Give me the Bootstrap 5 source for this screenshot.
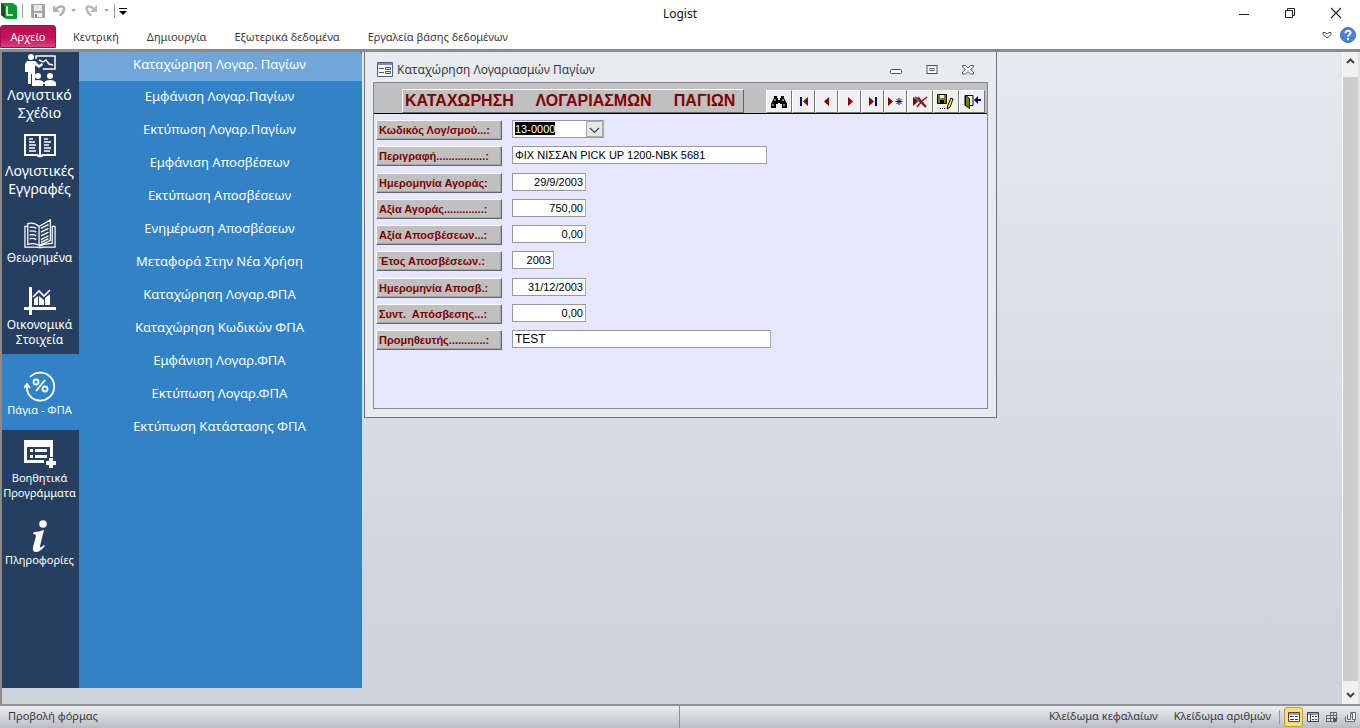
<!DOCTYPE html>
<html lang="el">
<head>
<meta charset="utf-8">
<meta name="viewport" content="width=device-width, initial-scale=1">
<title>Logist</title>
<link href="https://cdn.jsdelivr.net/npm/bootstrap@5.3.0/dist/css/bootstrap.min.css" rel="stylesheet">
<style>
body{font-family:"Noto Sans","Open Sans",sans-serif;font-size:11px;line-height:15px;color:#3b3b3b;background:#fff}
button,.plain-link{border:0;background:none;padding:0;color:inherit;text-decoration:none}
svg{display:block;flex:none}
/* title bar and ribbon */
.title-bar{height:25px}
.title-bar .app-name{font-size:12px;color:#111}
.title-bar .caption-buttons{gap:30px;padding-right:18px}
.vline{width:1px;height:14px;background:#999}
.ribbon{height:24px}
.ribbon .file-tab{width:56px;height:23px;color:#fff;background:linear-gradient(#b30f4f,#c4105a 55%,#d9437c);border:1px solid #a50d49;border-radius:3px 3px 0 0}
.ribbon .tabs{gap:28px;padding:0 0 2px 17px}
.workspace{border-top:3px solid #8a8d90;border-left:2px solid #8a8a8a;background:linear-gradient(#e6eaee,#cfd3dc 90%)}
/* navigation */
.side-nav{width:77px;background:#263f60;color:#fff;margin-bottom:16px}
.side-nav a{display:flex;flex-direction:column;align-items:center;color:#fff;text-decoration:none;text-align:center;white-space:nowrap;padding:16px 2px 4px 0}
.side-nav .mid{font-size:12px}
.side-nav .big{font-size:14px;line-height:18px;padding-top:4px}
.side-nav .first{padding-top:2px}
.side-nav .stats{padding-bottom:7px}
.side-nav .tools{padding-top:8px}
.side-nav .current{background:#3282c8;padding-bottom:13px}
.sub-nav{width:283px;background:#3282c8;margin-bottom:16px;font-size:13px}
.sub-nav a{display:flex;align-items:center;justify-content:center;height:33px;padding:0 2px 2px 0;color:#fff;text-decoration:none;white-space:nowrap}
.sub-nav a.current{height:29px;background:#70a6da;border-radius:0 4px 0 0;padding-bottom:4px}
/* child window */
.child-window{width:633px;margin-left:2px;border:1px solid #6d7378;border-top:0;background:#e8ebee;padding:0 8px 8px;color:#3b3b3b}
.child-title{height:30px;padding:5px 14px 0 4px;font-size:12px}
.child-title .caption-buttons{gap:24px}
.form-frame{border:1px solid #868a8f;background:#e6e6ff;min-height:327px;color:#000}
.form-head{background:#c0c0c0;border-bottom:1px solid #000;height:31px;padding:0 2px 0 28px}
.form-head h1{font:bold 16px/22px "Liberation Sans",sans-serif;color:#800000;margin:0;padding:0 8px 0 2px;white-space:pre;border:1px solid;border-color:#fff #666 #666 #fff}
.tool-buttons button{width:23px;height:23px;background:#f0f0f0;border:1px solid;border-color:#fff #777 #777 #fff;display:flex;align-items:center;justify-content:center}
.tool-buttons button.wide{width:26px}
.field-list{height:231px;margin:6px 0 0 2px}
.field-row{display:flex;align-items:flex-start;height:21px}
.field-row label{width:126px;height:20px;margin-right:10px;padding:1px 2px;background:#c0c0c0;border:1px solid;border-color:#fff #666 #666 #fff;box-shadow:inset -1px -1px #a4a4a4;font:bold 11px/16px "Liberation Sans",sans-serif;color:#800000;white-space:pre}
.fld{font:11px/14px "Liberation Sans",sans-serif;color:#000;background:#fff;border:1px solid #999;border-right-color:#aaa;border-radius:0;height:18px;width:74px;padding:0 2px;appearance:none}
.fld.year{width:42px}
.fld.desc{width:255px}
.fld.supplier{width:259px;font-size:12px}
.fld.code{width:92px;color:#fff;background:#fff linear-gradient(#000,#000) no-repeat 2px 1px/40px 13px}
.combo{position:relative}
.combo svg{position:absolute;right:1px;top:1px;pointer-events:none}
/* scroll bar */
.scroll-track{width:18px;background:#f0f0f0;border-left:1px solid #fff;border-right:2px solid #dfe2e6}
.scroll-thumb{background:#cdcdcd;margin-top:11px;margin-bottom:7px}
/* status bar */
.status-bar{height:24px;border-top:2px solid #8d9297;background:linear-gradient(#eceef0,#b9bdc2)}
.status-bar .cell{border-right:1px solid #8d9297;border-left:0}
.view-buttons button{width:19px;height:20px;display:flex;align-items:center;justify-content:center}
.view-buttons button.active{background:#fbdf74;border:1px solid #c9963a;border-radius:3px}
</style>
</head>
<body class="min-vh-100 d-flex flex-column">
<header>
  <div class="title-bar position-relative d-flex align-items-center">
    <div class="d-flex align-items-center pb-1">
      <svg width="18" height="18" viewBox="0 0 18 18"><path d="M1 1h12l4 3v13H6l-5-4z" fill="#0a9a30"/><path d="M1 1l4 3v12l-4-3z" fill="#045c1b"/><path d="M7 4v9h6" fill="none" stroke="#fff" stroke-width="1.500"/></svg>
      <span class="vline ms-1"></span>
      <button type="button" class="ms-2" aria-label="Αποθήκευση"><svg width="14" height="14" viewBox="0 0 14 14"><path d="M0 0h14v14H1l-1-1z" fill="#a5a5a5"/><path d="M3 1h8v6H3z" fill="#e9e9e9"/><path d="M3 9h8v4H3z" fill="#f5f5f5"/><path d="M4 10h2v3H4z" fill="#888"/></svg></button>
      <button type="button" class="ms-2 d-flex align-items-center" aria-label="Αναίρεση"><svg width="24" height="14" viewBox="0 0 24 14"><path d="M3 5c4-4 9-3 8 1-.5 3-3 4-4 6" fill="none" stroke="#b0b0b0" stroke-width="2.500"/><path d="M0 1v7h7z" fill="#b0b0b0"/><path d="M18 5h5l-2.500 3z" fill="#a8a8a8"/></svg></button>
      <button type="button" class="ms-2 d-flex align-items-center" aria-label="Επανάληψη"><svg width="25" height="14" viewBox="0 0 25 14"><path d="M9 5C5 1 0 2 2 6c.5 3 3 4 4 6" fill="none" stroke="#b9b9b9" stroke-width="2.500"/><path d="M12 1v7H5z" fill="#b9b9b9"/><path d="M19 5h5l-2.500 3z" fill="#a8a8a8"/></svg></button>
      <span class="vline ms-1"></span>
      <button type="button" class="ms-1" aria-label="Προσαρμογή"><svg width="8" height="8" viewBox="0 0 8 8"><path d="M0 1h8v1H0zM0 4h8L4 8z" fill="#000"/></svg></button>
    </div>
    <div class="app-name position-absolute start-50 top-50 translate-middle">Logist</div>
    <div class="caption-buttons ms-auto d-flex align-items-center">
      <button type="button" aria-label="Ελαχιστοποίηση"><svg width="12" height="12"><path d="M1 7.500h10" stroke="#222"/></svg></button>
      <button type="button" class="ms-1" aria-label="Επαναφορά"><svg width="12" height="12"><path d="M1.500 3.500h7v7h-7zM3.500 3V1.500h7v7H9" fill="none" stroke="#222"/></svg></button>
      <button type="button" class="ms-1" aria-label="Κλείσιμο"><svg width="12" height="12"><path d="M1 1l10 10M11 1L1 11" stroke="#222" stroke-width="1.200"/></svg></button>
    </div>
  </div>
  <nav class="ribbon d-flex align-items-center">
    <button type="button" class="file-tab align-self-start">Αρχείο</button>
    <div class="tabs d-flex">
      <a class="plain-link" href="#">Κεντρική</a>
      <a class="plain-link" href="#">Δημιουργία</a>
      <a class="plain-link" href="#">Εξωτερικά δεδομένα</a>
      <a class="plain-link" href="#">Εργαλεία βάσης δεδομένων</a>
    </div>
    <div class="ms-auto d-flex align-items-center gap-2 pe-1 pb-1">
      <button type="button" aria-label="Ανάπτυξη κορδέλας"><svg width="10" height="8" viewBox="0 0 10 8"><path d="M1 1.500h2l2 1.500 2-1.500h2v2L5 7 1 3.500z" fill="#fff" stroke="#4b4f55"/></svg></button>
      <button type="button" aria-label="Βοήθεια"><svg width="16" height="16" viewBox="0 0 16 16"><circle cx="8" cy="8" r="7.500" fill="#4b80d2" stroke="#3a6bbb"/><path d="M5.500 6.200C5.500 2.700 10.800 3 10.500 6c-.2 1.700-2.500 1.800-2.500 3.700" fill="none" stroke="#fff" stroke-width="2"/><circle cx="8" cy="12" r="1.200" fill="#fff"/></svg></button>
    </div>
  </nav>
</header>

<main class="workspace flex-grow-1 d-flex">
  <nav class="side-nav flex-shrink-0">
    <a href="#" class="big first">
      <svg width="32" height="32" viewBox="0 0 32 32" fill="#fff"><circle cx="7" cy="3" r="3"/><path d="M3 7h8l4 4 3-2 1 2-4 3-4-3v19H8V20H7v10H4V18H1v-8z"/><path d="M12 5V2h19v13H19" fill="none" stroke="#fff" stroke-width="1.500"/><path d="M15 6l4 2 3-2 3 4 4 1" fill="none" stroke="#fff" stroke-width="1.500"/><circle cx="14" cy="22" r="3"/><circle cx="26" cy="22" r="3"/><path d="M8 32v-3q1-3 6-3t6 3q1-3 6-3t6 3v3H21v-2h-2v2z"/></svg>
      <span>Λογιστικό<br>Σχέδιο</span></a>
    <a href="#" class="big">
      <svg width="32" height="32" viewBox="0 0 32 32" fill="none" stroke="#fff" stroke-width="2"><path d="M1 5h30v20H19q-3 3-6 0H1zM16 6v20"/><path d="M5 9h4M5 12h6M5 15h7M5 18h6M5 21h7M20 9h4M20 12h7M20 15h5M20 18h7M20 21h6" stroke-width="1.500"/></svg>
      <span>Λογιστικές<br>Εγγραφές</span></a>
    <a href="#" class="mid">
      <svg width="32" height="32" viewBox="0 0 34 32" fill="none" stroke="#fff" stroke-width="1.300"><path d="M4 5Q11 3 16 8v20Q11 25 4 27zM16 8L28 1v22l-12 5M4 8H1v22h13q3 1 6 0h13V8h-3v18q-8 0-14 3"/><path d="M6 9q4-1 7 1M6 13q4-1 7 1M6 17q4-1 7 1M6 21q4-1 7 1M18 10l8-4M18 14l8-4M18 18l8-4M18 22l8-4M18 25l8-4" stroke-width="1.500"/></svg>
      <span>Θεωρημένα</span></a>
    <a href="#" class="mid stats">
      <svg width="32" height="32" viewBox="0 0 32 32" fill="#fff"><path d="M5 2h3v28H5z"/><path d="M0 22h32v3H0z"/><path d="M10 14l4-3v9h-4zM15 11l5 4v5h-5zM21 13l5-4v11h-5z"/><path d="M9 12l6-6 5 5 6-6" fill="none" stroke="#fff" stroke-width="1.700"/></svg>
      <span>Οικονομικά<br>Στοιχεία</span></a>
    <a href="#" class="current">
      <svg width="32" height="32" viewBox="0 0 32 32" fill="none" stroke="#fff" stroke-width="1.800"><path d="M6 7a14 14 0 1 1-1 18M8 28a14 14 0 0 1-5-12M0 18l3-4 3 4"/><circle cx="12" cy="12" r="2.500"/><circle cx="21" cy="19" r="2.500"/><path d="M21 10L12 21"/></svg>
      <span>Πάγια - ΦΠΑ</span></a>
    <a href="#" class="tools">
      <svg width="32" height="32" viewBox="0 0 32 32" fill="#fff"><path d="M0 2h29v17h-3V9H3v13h17v3H0z"/><path d="M6 11h3v3H6zM6 17h3v3H6zM11 11h12v3H11zM11 17h12v3H11z"/><path d="M25 20h4v3h3v4h-3v3h-4v-3h-3v-4h3z"/></svg>
      <span>Βοηθητικά<br>Προγράμματα</span></a>
    <a href="#">
      <svg width="20" height="32" viewBox="0 0 20 32" fill="#fff"><circle cx="13" cy="4" r="3.800"/><path d="M4 12q5 0 10-2l-4 16q0 3 4-1l1 1q-5 6-9 6-4 0-3-5l3-11q0-2-3-2z"/></svg>
      <span>Πληροφορίες</span></a>
  </nav>
  <nav class="sub-nav flex-shrink-0">
    <a href="#" class="current">Καταχώρηση Λογαρ. Παγίων</a>
    <a href="#">Εμφάνιση Λογαρ.Παγίων</a>
    <a href="#">Εκτύπωση Λογαρ.Παγίων</a>
    <a href="#">Εμφάνιση Αποσβέσεων</a>
    <a href="#">Εκτύπωση Αποσβέσεων</a>
    <a href="#">Ενημέρωση Αποσβέσεων</a>
    <a href="#">Μεταφορά Στην Νέα Χρήση</a>
    <a href="#">Καταχώρηση Λογαρ.ΦΠΑ</a>
    <a href="#">Καταχώρηση Κωδικών ΦΠΑ</a>
    <a href="#">Εμφάνιση Λογαρ.ΦΠΑ</a>
    <a href="#">Εκτύπωση Λογαρ.ΦΠΑ</a>
    <a href="#">Εκτύπωση Κατάστασης ΦΠΑ</a>
  </nav>

  <section class="child-window align-self-start flex-shrink-0">
    <div class="child-title d-flex align-items-center">
      <svg width="16" height="15" viewBox="0 0 16 15"><path d="M.5.500h15v14H.5z" fill="#fff" stroke="#4a5f87"/><path d="M1 1h14v2H1z" fill="#6e90c8"/><path d="M2 6.500h5M2 10.500h5" stroke="#555"/><path d="M8.500 5.500h5v2h-5zM8.500 9.500h5v2h-5z" fill="#dfe8f5" stroke="#555"/></svg>
      <span class="ms-1">Καταχώρηση Λογαριασμών Παγίων</span>
      <div class="caption-buttons ms-auto d-flex">
        <button type="button" aria-label="Ελαχιστοποίηση παραθύρου"><svg width="12" height="10"><rect x=".5" y="4.500" width="11" height="4" rx="1" fill="#fff" stroke="#4d525a"/></svg></button>
        <button type="button" aria-label="Μεγιστοποίηση παραθύρου"><svg width="12" height="10"><rect x="1" y=".5" width="10" height="8" fill="#fff" stroke="#4d525a"/><rect x="4" y="3.500" width="4" height="2" fill="none" stroke="#4d525a"/></svg></button>
        <button type="button" aria-label="Κλείσιμο παραθύρου"><svg width="12" height="10" viewBox="0 0 12 10"><path d="M.5.500h3L6 3 8.500.500h3v1.500L8.500 4.500l3 2.500v2h-3L6 6.500 3.500 9h-3V7l3-2.500-3-2.500z" fill="#fff" stroke="#4d525a"/></svg></button>
      </div>
    </div>
    <div class="form-frame">
      <div class="form-head d-flex align-items-end">
        <h1>ΚΑΤΑΧΩΡΗΣΗ     ΛΟΓΑΡΙΑΣΜΩΝ     ΠΑΓΙΩΝ</h1>
        <div class="tool-buttons ms-auto d-flex">
          <button type="button" class="wide" aria-label="Εύρεση"><svg width="16" height="14" viewBox="0 0 16 14"><path d="M3 1h3v2h1v2h2V3h1V1h3v2l3 6v4h-5V9H9V8H7v1H5v4H0V9l3-6z"/><path d="M2 9v2M4 4v2M12 4v2M13 9v2" stroke="#fff"/></svg></button>
          <button type="button" aria-label="Πρώτη"><svg width="10" height="9"><path d="M1 0h2v9H1z" fill="#000080"/><path d="M9 0v9L4 4.500z" fill="#800000"/></svg></button>
          <button type="button" aria-label="Προηγούμενη"><svg width="10" height="9"><path d="M7 0v9L2 4.500z" fill="#800000"/></svg></button>
          <button type="button" aria-label="Επόμενη"><svg width="10" height="9"><path d="M3 0v9l5-4.500z" fill="#800000"/></svg></button>
          <button type="button" aria-label="Τελευταία"><svg width="10" height="9"><path d="M1 0v9l5-4.500z" fill="#800000"/><path d="M7 0h2v9H7z" fill="#000080"/></svg></button>
          <button type="button" aria-label="Νέα εγγραφή"><svg width="15" height="9"><path d="M0 0v9l5-4.500z" fill="#800000"/><path d="M11 1v7M7.500 4.500h7M8.500 2l5 5M13.500 2l-5 5" stroke="#000080"/></svg></button>
          <button type="button" class="wide" aria-label="Διαγραφή"><svg width="15" height="12"><path d="M0 1v9l5-4.500z" fill="#800000"/><path d="M2 1l11 10" stroke="#555" stroke-width="2"/><path d="M14 1Q8 5 4 11M5 1l8 10" fill="none" stroke="#900" stroke-width="1.500"/></svg></button>
          <button type="button" class="wide" aria-label="Αποθήκευση εγγραφής"><svg width="18" height="16" viewBox="0 0 18 16"><path d="M.5.500h9v9h-9z" fill="#808000" stroke="#000"/><path d="M3 1h4v3H3z" fill="#eee"/><path d="M3 6h4v3H3z" fill="#000"/><path d="M14 4l2 1-3 8-3 2 1-4z" fill="#ff0" stroke="#000"/><path d="M3 14h1v1H3zM5 14h1v1H5zM7 14h1v1H7z"/></svg></button>
          <button type="button" class="wide" aria-label="Έξοδος"><svg width="17" height="15" viewBox="0 0 17 15"><path d="M1 1.500h8v10H1z" fill="#fff" stroke="#000"/><path d="M1.500 1.500l4 3v10l-4-3z" fill="#808000" stroke="#000"/><path d="M10 6l4-4v3h3v2h-3v3z" fill="#000080"/></svg></button>
        </div>
      </div>
      <form class="field-list d-flex flex-column justify-content-between">
        <div class="field-row"><label for="code">Κωδικός Λογ/σμού...:</label>
          <div class="combo d-flex"><select id="code" class="fld code"><option>13-0000</option></select><svg width="17" height="16" viewBox="0 0 17 16"><path d="M.5.500h16v15H.5z" fill="#e6e6e6" stroke="#aaa"/><path d="M4 7l4.500 4.500L13 7" fill="none" stroke="#444" stroke-width="1.200"/></svg></div></div>
        <div class="field-row"><label for="desc">Περιγραφή................:</label><input id="desc" class="fld desc" value="ΦΙΧ ΝΙΣΣΑΝ PICK UP 1200-NBK 5681"></div>
        <div class="field-row"><label for="bought">Ημερομηνία Αγοράς:</label><input id="bought" class="fld text-end" value="29/9/2003"></div>
        <div class="field-row"><label for="price">Αξία Αγοράς.............:</label><input id="price" class="fld text-end" value="750,00"></div>
        <div class="field-row"><label for="depr">Αξία Αποσβέσεων...:</label><input id="depr" class="fld text-end" value="0,00"></div>
        <div class="field-row"><label for="year">Έτος Αποσβέσεων.:</label><input id="year" class="fld year text-end" value="2003"></div>
        <div class="field-row"><label for="deprdate">Ημερομηνία Αποσβ.:</label><input id="deprdate" class="fld text-end" value="31/12/2003"></div>
        <div class="field-row"><label for="rate">Συντ.  Απόσβεσης...:</label><input id="rate" class="fld text-end" value="0,00"></div>
        <div class="field-row"><label for="supplier">Προμηθευτής............:</label><input id="supplier" class="fld supplier" value="TEST"></div>
      </form>
    </div>
  </section>

  <div class="scroll-track ms-auto d-flex flex-column align-items-stretch">
    <svg class="mx-auto mt-1" width="9" height="10"><path d="M1 7l3.500-3.500L8 7" fill="none" stroke="#444" stroke-width="2"/></svg>
    <div class="scroll-thumb flex-grow-1"></div>
    <svg class="mx-auto mb-1" width="9" height="12"><path d="M1 5l3.500 3.500L8 5" fill="none" stroke="#444" stroke-width="2"/></svg>
  </div>
</main>

<footer class="status-bar d-flex align-items-stretch">
  <div class="cell w-50 ps-2 pb-1 d-flex align-items-center">Προβολή φόρμας</div>
  <div class="flex-grow-1 d-flex align-items-center justify-content-end gap-3 pb-1">
    <span>Κλείδωμα κεφαλαίων</span><span>Κλείδωμα αριθμών</span>
  </div>
  <span class="vline align-self-center ms-2 me-1"></span>
  <div class="view-buttons d-flex align-items-center">
    <button type="button" class="active" aria-label="Προβολή φόρμας"><svg width="12" height="10"><path d="M.5.500h11v9H.5z" fill="#fff" stroke="#444"/><path d="M1 2h10M2 4.500h4M2 7.500h4M7 4.500h3M7 7.500h3" stroke="#444"/></svg></button>
    <button type="button" aria-label="Προβολή φύλλου δεδομένων"><svg width="12" height="10"><path d="M.5.500h11v9H.5z" fill="#eee" stroke="#444"/><path d="M1 2h10M3.500 2v8M5 4.500h2M5 7.500h2M8 4.500h2M8 7.500h2" stroke="#444"/></svg></button>
    <button type="button" aria-label="Προβολή διάταξης"><svg width="12" height="11"><path d="M4.500.500h6v9h-10v-6h10M4.500 0v10M.5 6.500h10M7.500 0v10" fill="#ddd" stroke="#666"/><path d="M8 6h4L8 11z" fill="#555"/></svg></button>
    <button type="button" aria-label="Προβολή σχεδίασης"><svg width="12" height="11"><path d="M.5 4.500v5h9v-2M2.500 2.500v5h3v-6h2v6h3v-7h-5" fill="#eee" stroke="#666"/></svg></button>
  </div>
</footer>
<script src="https://cdn.jsdelivr.net/npm/bootstrap@5.3.0/dist/js/bootstrap.bundle.min.js"></script>
</body>
</html>
